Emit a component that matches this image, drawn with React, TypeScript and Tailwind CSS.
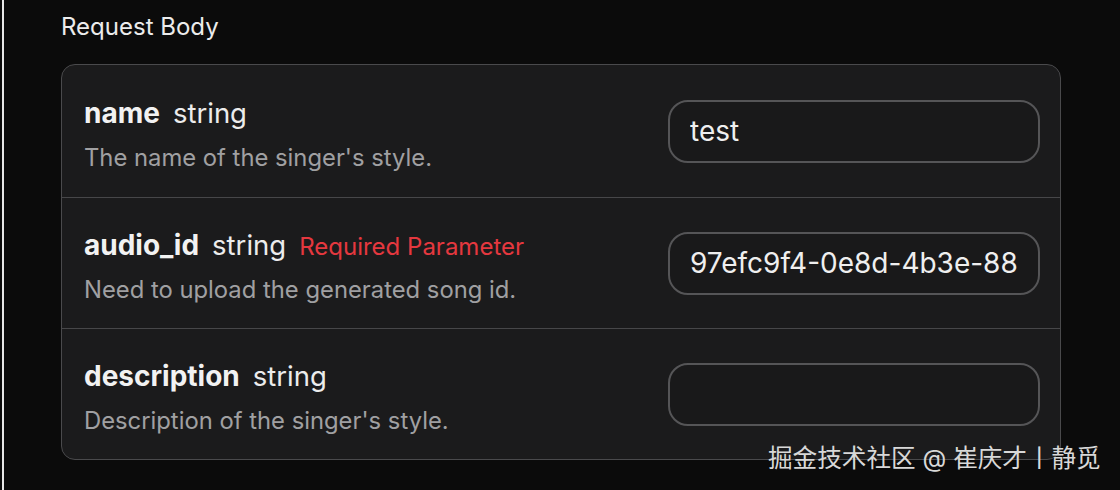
import React from 'react'

interface Param {
  name: string
  type: string
  required?: boolean
  description: string
  value: string
}

const params: Param[] = [
  { name: 'name', type: 'string', description: "The name of the singer's style.", value: 'test' },
  {
    name: 'audio_id',
    type: 'string',
    required: true,
    description: 'Need to upload the generated song id.',
    value: '97efc9f4-0e8d-4b3e-88d4-2c1a7f0b9e31',
  },
  { name: 'description', type: 'string', description: "Description of the singer's style.", value: '' },
]

export default function App() {
  return (
    <div
      className="relative flex h-[490px] w-[1120px] overflow-hidden bg-[#0b0b0b] text-white"
      style={{ fontFamily: 'Inter, "Noto Sans CJK SC", sans-serif' }}
    >
      {/* left edge rule */}
      <div className="ml-[2px] h-full w-[2px] bg-[#e8e8e8]" />

      <div className="ml-[57px] flex w-[1000px] flex-col">
        <h2 className="mt-[12px] h-[30px] text-[24px] leading-[30px] text-[#ececec]">Request Body</h2>

        {/* Params card */}
        <div className="mt-[22px] overflow-hidden rounded-[14px] border border-[#4a4a4c] bg-[#1b1b1c]">
          {params.map((p, i) => (
            <div
              key={p.name}
              className={`flex items-center justify-between pl-[22px] pr-[20px] ${
                i > 0 ? 'h-[131px] border-t border-[#474749]' : 'h-[132px]'
              }`}
            >
              <div className="flex flex-col pt-[6px]">
                <div className="flex h-[34px] items-baseline leading-[34px]">
                  <span className="text-[28px] font-bold text-[#f2f2f2]">{p.name}</span>
                  <span className="ml-[13px] text-[27.5px] text-[#ececec]">{p.type}</span>
                  {p.required && (
                    <span className="ml-[13px] text-[24px] text-[#e5383f]">Required Parameter</span>
                  )}
                </div>
                <p className="mt-[13px] h-[30px] text-[23.8px] leading-[30px] text-[#a0a0a2]">{p.description}</p>
              </div>

              <input
                readOnly
                value={p.value}
                className="h-[63px] w-[372px] rounded-[20px] border-2 border-[#555557] bg-[#19191a] px-[20px] text-[28px] text-[#efefef] outline-none"
              />
            </div>
          ))}
        </div>
      </div>

      {/* watermark */}
      <div className="absolute left-[768px] top-[442px] text-[24.6px] leading-[32px] text-[#d8d8d8]">
        掘金技术社区 @ 崔庆才丨静觅
      </div>
    </div>
  )
}
